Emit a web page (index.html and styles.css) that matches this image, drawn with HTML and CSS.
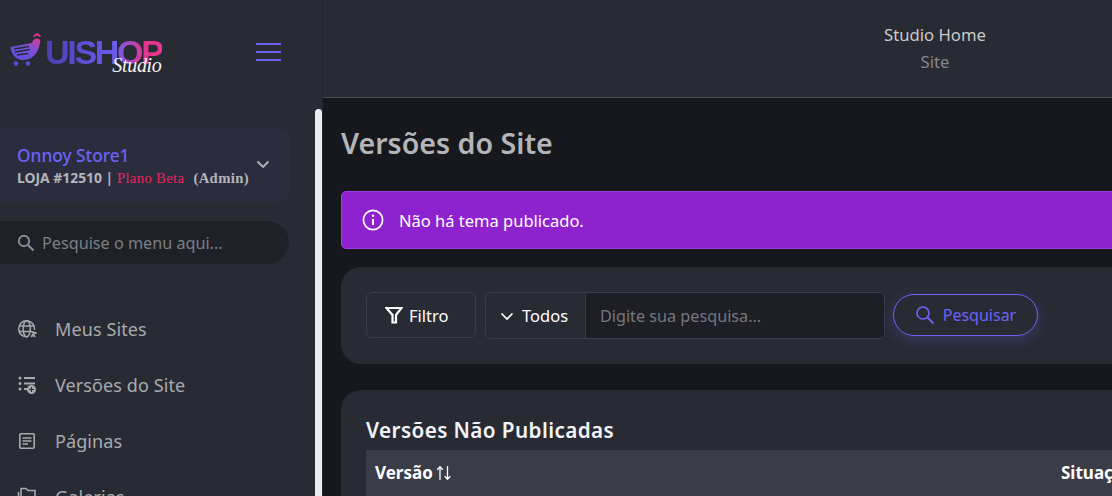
FILE: index.html
```html
<!DOCTYPE html>
<html lang="pt-BR">
<head>
    <meta charset="UTF-8">
    <meta name="viewport" content="width=device-width, initial-scale=1.0">
    <title>Versões do Site</title>
    <link rel="stylesheet" href="styles.css">
</head>
<body>
    <aside class="sidebar">
        <div class="sidebar-top">
            <div class="logo">
                <svg class="logo-cart" width="32" height="34" viewBox="0 0 32 34">
                    <defs>
                        <linearGradient id="cartGrad" x1="0" y1="1" x2="1" y2="0">
                            <stop offset="0" stop-color="#5a4de0"/>
                            <stop offset="0.6" stop-color="#7a50d8"/>
                            <stop offset="1" stop-color="#e0388f"/>
                        </linearGradient>
                    </defs>
                    <path d="M0.5 14 L22 10 C23 7 24 6 26 5.5 C29 5 31 7 30 10 C28 20 23 27 13 27 C6 27 1 21 0.5 14 Z" fill="url(#cartGrad)"/>
                    <path d="M4 16 L19 13.5 M5 19 L20 16.5 M7 22 L18 20.5" stroke="#282b34" stroke-width="1.3" fill="none"/>
                    <path d="M23.5 3.5 L27 1 L30.5 3.5" stroke="#e0388f" stroke-width="1.8" fill="none"/>
                    <circle cx="6" cy="30.5" r="2.2" fill="#5a4de0"/>
                    <circle cx="18" cy="30.5" r="2.2" fill="#5a4de0"/>
                </svg>
                <div class="logo-word">UISHOP</div>
                <div class="logo-sub">Studio</div>
            </div>
            <button class="menu-toggle"><span></span><span></span><span></span></button>
        </div>

        <div class="store-card">
            <div class="store-info">
                <div class="store-name">Onnoy Store1</div>
                <div class="store-meta">LOJA #12510 | <span class="store-plan">Plano Beta</span><span class="store-role">(Admin)</span></div>
            </div>
            <svg width="14" height="14" viewBox="0 0 14 14" class="store-arrow"><path d="M1.5 4.5 L7 10 L12.5 4.5" fill="none" stroke="#b4b5b8" stroke-width="1.8"/></svg>
        </div>

        <div class="menu-search">
            <svg width="18" height="18" viewBox="0 0 18 18"><circle cx="7" cy="7" r="5.2" fill="none" stroke="#8c8d92" stroke-width="1.9"/><path d="M10.8 10.8 L16.5 16.5" stroke="#8c8d92" stroke-width="2.1"/></svg>
            <span>Pesquise o menu aqui...</span>
        </div>

        <nav class="menu">
            <div class="menu-item">
                <svg width="20" height="20" viewBox="0 0 20 20" fill="none" stroke="#a9aaae" stroke-width="1.5"><path d="M17.5 11 A8 8 0 1 0 10.5 17.8"/><ellipse cx="9.7" cy="9.7" rx="3.6" ry="8"/><path d="M2 7 H17.4 M2 12.4 H12"/><path d="M12.5 12 L18.5 14 L16 15.3 L18 18 M16 15.3 L14.3 18" stroke-width="1.8"/></svg>
                <span>Meus Sites</span>
            </div>
            <div class="menu-item">
                <svg width="20" height="20" viewBox="0 0 20 20"><g fill="#a9aaae"><circle cx="3" cy="3" r="1.5"/><circle cx="3" cy="8.5" r="1.5"/><circle cx="3" cy="14" r="1.5"/><rect x="7" y="2" width="11" height="2"/><rect x="7" y="7.5" width="11" height="2"/><rect x="7" y="13" width="4" height="2"/><circle cx="14.5" cy="14.5" r="4.5"/></g><path d="M14.5 12 V17 M12 14.5 H17" stroke="#282b34" stroke-width="1.2"/></svg>
                <span>Versões do Site</span>
            </div>
            <div class="menu-item">
                <svg width="20" height="20" viewBox="0 0 20 20" fill="none" stroke="#a9aaae" stroke-width="1.6"><rect x="2.8" y="2.8" width="14.4" height="14.4" rx="1"/><path d="M5.5 7 H14.5 M5.5 10 H14.5 M5.5 13 H11"/></svg>
                <span>Páginas</span>
            </div>
            <div class="menu-item">
                <svg width="20" height="20" viewBox="0 0 20 20" fill="none" stroke="#a9aaae" stroke-width="1.6"><path d="M4 2 V1.5 H9 L11 3.5 H18 V16 H4 Z"/><path d="M1.5 5 V18.5 H15"/></svg>
                <span>Galerias</span>
            </div>
        </nav>
        <div class="scroll-thumb"></div>
    </aside>

    <main class="content">
        <header class="topbar">
            <div class="topbar-title">Studio Home</div>
            <div class="topbar-sub">Site</div>
        </header>

        <div class="page">
            <h1 class="page-title">Versões do Site</h1>

            <div class="alert">
                <svg width="22" height="22" viewBox="0 0 22 22" fill="none" stroke="#fff" stroke-width="1.7"><circle cx="11" cy="11" r="9.6"/><path d="M11 10 V16" stroke-width="2"/><circle cx="11" cy="6.8" r="1.2" fill="#fff" stroke="none"/></svg>
                <span>Não há tema publicado.</span>
            </div>

            <section class="filter-card">
                <button class="btn-filter">
                    <svg width="18" height="18" viewBox="0 0 18 18" fill="none" stroke="#fff" stroke-width="2.2"><path d="M1.5 2 H16.5 L11 9 V16.5 H7.5 V9 Z"/></svg>
                    Filtro
                </button>
                <div class="search-group">
                    <div class="search-select">
                        <svg width="14" height="14" viewBox="0 0 14 14"><path d="M1.5 4.5 L7 10 L12.5 4.5" fill="none" stroke="#fff" stroke-width="1.7"/></svg>
                        Todos
                    </div>
                    <div class="search-input">Digite sua pesquisa...</div>
                </div>
                <button class="btn-search">
                    <svg width="20" height="20" viewBox="0 0 20 20" fill="none" stroke="#6c63f5" stroke-width="1.7"><circle cx="8" cy="8" r="6"/><path d="M12.5 12.5 L18.5 18.5" stroke-width="1.9"/></svg>
                    Pesquisar
                </button>
            </section>

            <section class="table-card">
                <h2 class="table-title">Versões Não Publicadas</h2>
                <div class="table-head">
                    <div class="col-version">
                        Versão
                        <svg class="sort" width="16" height="16" viewBox="0 0 16 16" fill="none" stroke="#fff" stroke-width="1.3"><path d="M4 15 V2 M1.2 4.8 L4 1.8 L6.8 4.8"/><path d="M11.5 1 V14 M8.7 11.2 L11.5 14.2 L14.3 11.2"/></svg>
                    </div>
                    <div>Situação</div>
                </div>
            </section>
        </div>
    </main>
</body>
</html>
```

FILE: styles.css
```css
* { margin: 0; padding: 0; box-sizing: border-box; }

body {
    display: flex;
    height: 496px;
    overflow: hidden;
    background: #17181d;
    font-family: "Noto Sans", "Open Sans", sans-serif;
    color: #fff;
}

button {
    font-family: inherit;
    background: none;
    color: inherit;
    cursor: pointer;
}

/* sidebar */
.sidebar {
    position: relative;
    flex: 0 0 323px;
    background: #282b34;
    border-right: 1px solid #23252d;
    overflow: hidden;
}

.sidebar-top {
    display: flex;
    justify-content: space-between;
    align-items: center;
    height: 97px;
    padding: 6px 41px 0 10px;
}

.logo {
    position: relative;
    display: flex;
    align-items: center;
    gap: 3px;
    margin-top: -4px;
}

.logo-word {
    font-family: "Liberation Sans", sans-serif;
    font-size: 34px;
    font-weight: 700;
    letter-spacing: -2.3px;
    line-height: 36px;
    margin-top: 4px;
    background: linear-gradient(90deg, #4a3fb5 0%, #6a5cf0 60%, #e5358f 85%);
    -webkit-background-clip: text;
    background-clip: text;
    color: transparent;
}

.logo-sub {
    position: absolute;
    right: 0;
    bottom: -7px;
    font-family: "Liberation Serif", serif;
    font-style: italic;
    font-size: 20px;
    letter-spacing: -0.3px;
    color: #f4f4f6;
}

.menu-toggle {
    display: flex;
    flex-direction: column;
    gap: 6px;
    width: 25px;
    border: none;
}

.menu-toggle span {
    display: block;
    height: 2px;
    background: #6c63f5;
}

.store-card {
    display: flex;
    justify-content: space-between;
    align-items: center;
    width: 290px;
    height: 74px;
    margin-top: 31px;
    padding: 0 20px 0 17px;
    background: #2b2d3f;
    border-radius: 0 12px 12px 0;
}

.store-name {
    font-size: 17.3px;
    font-weight: 500;
    line-height: 23px;
    margin-top: 2px;
    color: #6c63f5;
}

.store-meta {
    font-size: 13.9px;
    font-weight: 700;
    line-height: 21px;
    color: #b4b5b8;
    white-space: nowrap;
}

.store-plan,
.store-role {
    font-family: "Liberation Serif", serif;
    font-weight: 400;
    font-size: 14.7px;
    letter-spacing: 0.35px;
}

.store-plan { color: #e8265e; }
.store-role { margin-left: 9px; font-weight: 700; }

.store-arrow { margin-bottom: 3px; }

.menu-search {
    display: flex;
    align-items: center;
    gap: 7px;
    width: 289px;
    height: 43px;
    margin-top: 19px;
    padding-left: 17px;
    background: #1f2128;
    border-radius: 0 22px 22px 0;
    font-size: 16.2px;
    color: #7e7f84;
}

.menu {
    margin-top: 37px;
}

.menu-item {
    display: flex;
    align-items: center;
    gap: 18px;
    height: 56px;
    padding-left: 17px;
    font-size: 18px;
    letter-spacing: 0.1px;
    color: #a9aaae;
}

.scroll-thumb {
    position: absolute;
    top: 109px;
    right: 0;
    bottom: -20px;
    width: 7px;
    background: #edeef2;
    border-radius: 4px 4px 0 0;
}

/* conteudo */
.content {
    flex: 0 0 1224px;
}

.topbar {
    height: 98px;
    padding-top: 21px;
    background: #282b34;
    border-bottom: 1px solid #4a4c54;
    text-align: center;
    font-size: 16.7px;
    line-height: 27px;
}

.topbar-title { color: #c9cacd; }
.topbar-sub { color: #85868b; }

.page {
    padding: 0 0 0 18px;
}

.page-title {
    margin-top: 26px;
    font-size: 28.6px;
    font-weight: 600;
    line-height: 38px;
    color: #b4b5b8;
}

.alert {
    display: flex;
    align-items: center;
    gap: 15px;
    height: 58px;
    margin-top: 29px;
    padding-left: 20px;
    background: #8e22cf;
    border: 1px solid #a03be0;
    border-radius: 5px;
    font-size: 16.5px;
}

.filter-card {
    display: flex;
    align-items: flex-start;
    height: 97px;
    margin-top: 18px;
    padding: 25px;
    background: #282b34;
    border-radius: 20px 0 0 20px;
}

.btn-filter {
    display: flex;
    align-items: center;
    gap: 6px;
    width: 110px;
    height: 46px;
    padding-left: 18px;
    border: 1px solid #363e4d;
    border-radius: 6px;
    font-size: 16.5px;
}

.search-group {
    display: flex;
    width: 400px;
    height: 47px;
    margin-left: 9px;
    border: 1px solid #363e4d;
    border-radius: 6px;
    overflow: hidden;
}

.search-select {
    display: flex;
    align-items: center;
    gap: 8px;
    width: 100px;
    padding-left: 14px;
    border-right: 1px solid #363e4d;
    font-size: 16.5px;
}

.search-input {
    display: flex;
    align-items: center;
    flex: 1;
    padding-left: 14px;
    background: #1d1e26;
    font-size: 16.2px;
    color: #77787d;
}

.btn-search {
    display: flex;
    align-items: center;
    justify-content: center;
    gap: 8px;
    width: 145px;
    height: 42px;
    margin: 2px 0 0 8px;
    border: 1px solid #6c63f5;
    border-radius: 21px;
    box-shadow: 0 4px 14px rgba(108, 99, 245, 0.25);
    font-size: 16px;
    color: #6c63f5;
}

.table-card {
    height: 140px;
    margin-top: 26px;
    padding: 25px 25px 0;
    background: #282b34;
    border-radius: 20px 0 0 0;
}

.table-title {
    font-size: 20.7px;
    font-weight: 600;
    line-height: 28px;
    letter-spacing: 0.4px;
    color: #f2f3f7;
    margin-top: 1px;
}

.table-head {
    display: flex;
    height: 60px;
    margin-top: 6px;
    padding-top: 11px;
    background: #3a3c48;
    font-size: 17px;
    font-weight: 700;
    line-height: 24px;
}

.col-version {
    display: flex;
    align-items: center;
    align-self: flex-start;
    gap: 3px;
    width: 695px;
    padding-left: 9px;
}

.sort { flex: none; }
```
